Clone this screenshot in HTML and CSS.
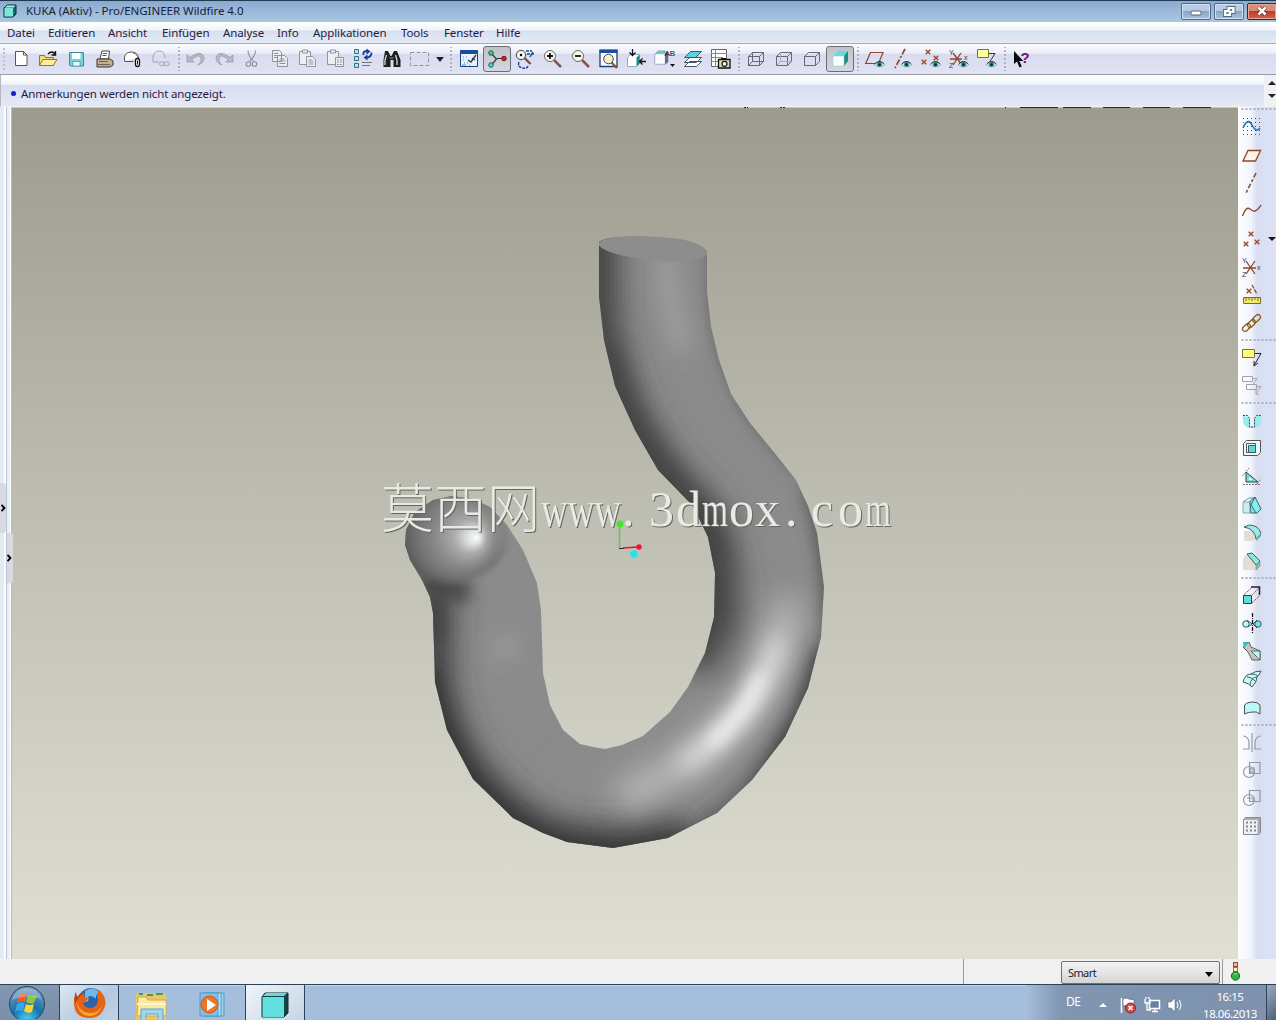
FILE: index.html
```html
<!DOCTYPE html>
<html lang="de">
<head>
    <meta charset="UTF-8">
    <title>KUKA (Aktiv) - Pro/ENGINEER Wildfire 4.0</title>
    <link rel="stylesheet" href="styles.css">
</head>
<body>
    <svg class="defs" width="0" height="0">
        <symbol id="eye" viewBox="0 0 12 8">
            <path d="M0 4Q6-2 12 4Q6 9 0 4z" fill="#d8f0f0" stroke="#467" stroke-width=".6"/>
            <circle cx="6" cy="4" r="2.8" fill="#1f7f86"/><circle cx="6" cy="4" r="1.2" fill="#012"/>
            <path d="M1 3Q6-2 11 3" fill="none" stroke="#122"/>
        </symbol>
        <symbol id="cross" viewBox="0 0 6 6"><path d="M.700.700l4.600 4.600M5.300.700L.700 5.300" stroke="#9c4a2c" stroke-width="1.400"/></symbol>
    </svg>

    <!-- Titelleiste -->
    <header class="titlebar">
        <svg class="app-icon" width="14" height="14" viewBox="0 0 14 14"><path d="M1 4l3-3h9v9l-3 3H1z" fill="#147070" stroke="#123"/><path d="M1.500 4h8.500v8.500H1.500z" fill="#7ce6d8"/><path d="M2 3.500L4 1.500h8.500l-2 2z" fill="#a5efe5"/></svg>
        <span class="title">KUKA (Aktiv) - Pro/ENGINEER Wildfire 4.0</span>
        <div class="win-buttons">
            <div class="win-btn"><svg width="28" height="14" viewBox="0 0 28 14"><rect x="9" y="7" width="10" height="4" rx="1" fill="#fff" stroke="#55677e"/></svg></div>
            <div class="win-btn"><svg width="28" height="14" viewBox="0 0 28 14"><g fill="none" stroke="#55677e" stroke-width="3"><path d="M13 3.500h6v5h-6zM9.500 6.500h6v5h-6z"/></g><g fill="#fff" stroke="#fff" stroke-width="1.200"><path d="M13 3.500h6v5h-6zM9.500 6.500h6v5h-6z"/></g><path d="M11.500 8.500h2v1h-2zM15 5.500h2v1h-2z" fill="#55677e" stroke="#55677e" stroke-width=".6"/></svg></div>
            <div class="win-btn close"><svg width="28" height="14" viewBox="0 0 28 14"><path d="M10.500 3.500l7 7M17.500 3.500l-7 7" stroke="#603030" stroke-width="4"/><path d="M10.500 3.500l7 7M17.500 3.500l-7 7" stroke="#fff" stroke-width="2.500"/></svg></div>
        </div>
    </header>

    <nav class="menubar">
        <span class="m1">Datei</span><span class="m2">Editieren</span><span class="m3">Ansicht</span><span class="m4">Einfügen</span><span class="m5">Analyse</span><span class="m6">Info</span><span class="m7">Applikationen</span><span class="m8">Tools</span><span class="m9">Fenster</span><span>Hilfe</span>
    </nav>

    <!-- Werkzeugleiste oben -->
    <div class="toolbar">
        <div class="btn"><svg viewBox="0 0 20 20"><path d="M4.500 2.500h8l3.500 3.500v10.500H4.500z" fill="#fff" stroke="#555"/><path d="M12.500 2.500V6H16" fill="none" stroke="#555"/></svg></div>
        <div class="btn"><svg viewBox="0 0 20 20"><path d="M.500 16.500V6.500h5l1 2h8v8z" fill="#f4dc70" stroke="#927824"/><path d="M.500 16.500l3.500-6h14l-4 6z" fill="#ffef9a" stroke="#927824"/><path d="M9 5q4-4 7 0M16.500 2v4h-4" fill="none" stroke="#111" stroke-width="1.400"/></svg></div>
        <div class="btn"><svg viewBox="0 0 20 20"><path d="M2.500 3.500h14v13.500h-13l-1-1z" fill="#72d4da" stroke="#3c8c98"/><path d="M5 4h8.500v6H5z" fill="#fff"/><path d="M6 12.500h7V17H6z" fill="#e8ffff" stroke="#3c8c98" stroke-width=".7"/></svg></div>
        <div class="btn"><svg viewBox="0 0 20 20"><path d="M5 10l2-8h7.500l-1 8z" fill="#fff" stroke="#444"/><path d="M8 4.500h4M7.500 6.500h4" stroke="#555"/><path d="M2 10h13l3 2v4l-3 2H2z" fill="#c4b28c" stroke="#333"/><path d="M4 12.500h9M3 15.500h12" fill="none" stroke="#665"/></svg></div>
        <div class="btn"><svg viewBox="0 0 20 20"><path d="M1.500 12V8q1-5 7-5 6 0 7 6" fill="#fff" stroke="#555"/><path d="M1.500 12.500h9" stroke="#555"/><path d="M10 4q5 1 5 6" fill="none" stroke="#d44"/><rect x="12.500" y="9.500" width="4" height="8" rx="2" fill="#fff" stroke="#111" stroke-width="1.300"/><path d="M14.500 11.500v4" stroke="#111"/></svg></div>
        <div class="btn"><svg viewBox="0 0 20 20" fill="none" stroke="#a3a6af"><path d="M2 13V8q1-6 7-6 5 1 5 7M2 13h6"/><rect x="8.500" y="13" width="5" height="3.500" rx="1.700"/><rect x="13" y="13" width="5.500" height="3.500" rx="1.700"/></svg></div>
        <i class="sep w7"></i>
        <div class="btn"><svg viewBox="0 0 20 20"><path d="M1 6v7h7l-2.500-2.200Q13 4 15 9q1 4-3 7 6-2 6-7Q16 0 4 8.500z" fill="#b8bcc6" stroke="#8e929d" stroke-width=".7"/></svg></div>
        <div class="btn"><svg viewBox="0 0 20 20"><path d="M19 6v7h-7l2.500-2.200Q7 4 5 9q-1 4 3 7-6-2-6-7Q4 0 16 8.500z" fill="#b8bcc6" stroke="#8e929d" stroke-width=".7"/></svg></div>
        <div class="btn"><svg viewBox="0 0 20 20" fill="none" stroke="#8f929a" stroke-width="1.100"><path d="M6 1.500q0 5 5.500 11M13.500 1.500q0 5-6 11"/><circle cx="6.500" cy="15" r="2.300"/><circle cx="12.500" cy="15" r="2.300"/></svg></div>
        <div class="btn"><svg viewBox="0 0 20 20" fill="#edeef4" stroke="#8f929a"><path d="M2.500 1.500h7l2 2v9h-9zM7.500 6.500h7l3 3v8h-10z"/><path d="M4 4.500h4M4 6.500h3M4 8.500h3M9.500 10h5M9.500 12h6M9.500 14.500h6"/></svg></div>
        <div class="btn"><svg viewBox="0 0 20 20" fill="#edeef4" stroke="#92959e"><path d="M1.500 2.500h11v13h-11z"/><path d="M4.500 1h5v3h-5zM8.500 7.500h6l3 3v7h-9z"/><path d="M10.500 11h4M10.500 13h5M10.500 15h5"/></svg></div>
        <div class="btn"><svg viewBox="0 0 20 20" fill="#edeef4" stroke="#92959e"><path d="M1.500 2.500h11v13h-11z"/><path d="M4.500 1h5v3h-5zM9.500 8.500h8v9h-8z"/><path d="M11 11h2M14 11h2M11 13h2M14 13h2M11 15.500h2M14 15.500h2"/></svg></div>
        <div class="btn"><svg viewBox="0 0 20 20"><g fill="#bde4e6" stroke="#2a7480"><path d="M.500.500h4v4h-4zM.500 7.500h4v4h-4zM.500 14.500h4v4h-4z"/></g><path d="M9.500 6q-1-4 4-4M17.500 3.500q0 5-5 5" fill="none" stroke="#153f9c" stroke-width="1.800"/><path d="M12.500-.5l4 3-4 3zM13.500 5.500v6l-4-3z" fill="#153f9c"/><path d="M8 13.500h10M8 16.500h8" stroke="#777"/></svg></div>
        <div class="btn"><svg viewBox="0 0 20 20"><path d="M3 2h3l2.500 5h1L12 2h3l3.500 9v7h-7v-7h-3v7h-7v-7z" fill="#1d1f20"/><path d="M4.500 6l-1.500 5v5M13.500 6l1.500 5v5" stroke="#ddd" stroke-width="1.300" fill="none"/><path d="M7.500 9h4" stroke="#999"/></svg></div>
        <div class="btn"><svg viewBox="0 0 20 20"><path d="M.500 3.500h18v13h-18z" fill="none" stroke="#9094a0" stroke-dasharray="4 2"/></svg></div>
        <div class="drop"></div>
        <i class="sep w9"></i>
        <div class="btn"><svg viewBox="0 0 20 20"><path d="M1.500 1.500h17v16h-17z" fill="#e6f3ff" stroke="#17417f"/><path d="M1 1h18v4H1z" fill="#164f9c"/><path d="M17 6l-5 7-3-2M13 9l3 2" fill="none" stroke="#334" stroke-width="1.300"/><path d="M4 8h1M7 8h1M4 11h1M5 14h1M8 14h1M3 16h4M10 16h1" stroke="#4d98dc"/></svg></div>
        <div class="btn pressed"><svg viewBox="0 0 20 20"><path d="M4.500 4.500l5 5.500-5 6M10 9.500h8" fill="none" stroke="#333" stroke-width="1.200"/><circle cx="4" cy="4" r="2.300" fill="#58bd80" stroke="#17663c"/><circle cx="4" cy="16" r="2.300" fill="#58cbd0" stroke="#176c70"/><circle cx="17" cy="9.500" r="2.300" fill="#c92038" stroke="#851020"/></svg></div>
        <div class="btn"><svg viewBox="0 0 20 20"><circle cx="6" cy="6" r="4.700" fill="#f3f3ee" stroke="#444"/><circle cx="6" cy="6" r="1.200"/><path d="M9.500 9l6 6" stroke="#75504a" stroke-width="2.300"/><path d="M11 2h6M12 5h7M15 8l3-5M4 13q-2 5 4 6M13 17q-1 3-5 2" fill="none" stroke="#17439a" stroke-width="1.400" stroke-dasharray="3 1"/></svg></div>
        <div class="btn"><svg viewBox="0 0 20 20"><path d="M11 11l7 7" stroke="#87564a" stroke-width="2.500"/><circle cx="7" cy="7" r="5.500" fill="#fbfbf2" stroke="#666"/><path d="M4 7h6M7 4v6" stroke="#111" stroke-width="1.800"/></svg></div>
        <div class="btn"><svg viewBox="0 0 20 20"><path d="M11 11l7 7" stroke="#87564a" stroke-width="2.500"/><circle cx="7" cy="7" r="5.500" fill="#fbfbf2" stroke="#666"/><path d="M4 7h6" stroke="#111" stroke-width="1.800"/></svg></div>
        <div class="btn"><svg viewBox="0 0 20 20"><path d="M1 1.500h17v16H1z" fill="#fff" stroke="#163f7e" stroke-width="1.300"/><path d="M.500.500h18v3.500H.500z" fill="#164f9c"/><path d="M12 13l6 6" stroke="#87564a" stroke-width="2.300"/><circle cx="9.500" cy="10" r="4.800" fill="#f2efd6" stroke="#444"/></svg></div>
        <div class="btn"><svg viewBox="0 0 20 20"><path d="M.500 8.500l3-3h9v9l-3 3h-9z" fill="#fff" stroke="#9ab"/><path d="M9.500 8.500l3-3v9l-3 3z" fill="#288"/><path d="M5.500 0v6M2.500 3.500l3 3 3-3M19 12.500h-6M15.500 9.500l-3 3 3 3" fill="none" stroke="#111" stroke-width="1.300"/></svg></div>
        <div class="btn"><svg viewBox="0 0 20 20"><path d="M0 5l3-3h7v2l3 2v7l-2 2H0z" fill="#61d2d9" stroke="#90a0b8"/><path d="M0 5h10v10H0z" fill="#fff" stroke="#aac" stroke-width=".5"/><path d="M10 5l3-2v10l-3 2z" fill="#5c6f90"/><text x="9.500" y="6.500" class="mini">AB</text><path d="M15 15h5l-2.500 3z" fill="#111"/></svg></div>
        <div class="btn"><svg viewBox="0 0 20 20" stroke="#456"><path d="M1.500 17.500l5-5h12l-5 5zM1.500 13.500l5-5h12l-5 5z" fill="#fff"/><path d="M1.500 8.500l6-6h11l-6 6z" fill="#58d5d8"/></svg></div>
        <div class="btn"><svg viewBox="0 0 20 20"><path d="M.500.500h15v17H.500z" fill="#fff" stroke="#666"/><path d="M0 4.500h16M0 8.500h12M0 12.500h8M4.500 0v18" stroke="#888"/><path d="M7.500 10.500h11.500v8.500H7.500z" fill="#ded6bd" stroke="#111" stroke-width="1.300"/><circle cx="13.500" cy="14.800" r="2.500" fill="#fff" stroke="#111" stroke-width="1.200"/><path d="M10 9.500h5" stroke="#111"/></svg></div>
        <i class="sep w7"></i>
        <div class="btn"><svg viewBox="0 0 20 20" fill="none" stroke="#656872"><path d="M2.500 7.500l4-4h11v9l-4 4h-11zM2.500 7.500h11v9M13.500 7.500l4-4M6.500 3.500v9h11M6.500 12.500l-4 4"/></svg></div>
        <div class="btn"><svg viewBox="0 0 20 20" fill="none" stroke="#656872"><path d="M2.500 7.500l4-4h11v9l-4 4h-11zM2.500 7.500h11v9M13.500 7.500l4-4"/><path d="M6.500 3.500v9h11M6.500 12.500l-4 4" stroke="#aab" /></svg></div>
        <div class="btn"><svg viewBox="0 0 20 20" fill="none" stroke="#656872"><path d="M2.500 7.500l4-4h11v9l-4 4h-11zM2.500 7.500h11v9M13.500 7.500l4-4"/></svg></div>
        <div class="btn pressed"><svg viewBox="0 0 20 20"><path d="M3 7l5-5h10l-4 5z" fill="#66ddda"/><path d="M14 7l4-5v10l-4 5z" fill="#238889"/><path d="M3 7h11v10H3z" fill="#f8ffff" stroke="#9cc" stroke-width=".6"/></svg></div>
        <i class="sep w7"></i>
        <div class="btn"><svg viewBox="0 0 20 20"><path d="M.700 14.500L5.500 3.500H18L13.500 14.500z" fill="none" stroke="#8b482c" stroke-width="1.200"/><use href="#eye" x="9" y="12" width="11" height="7"/></svg></div>
        <div class="btn"><svg viewBox="0 0 20 20"><path d="M12 0L2 19" stroke="#8b482c" stroke-width="1.700" stroke-dasharray="6 2 2 2"/><use href="#eye" x="8" y="12" width="11" height="7"/></svg></div>
        <div class="btn"><svg viewBox="0 0 20 20"><use href="#cross" x="4" y="0" width="6" height="6"/><use href="#cross" x="0" y="10" width="6" height="6"/><use href="#cross" x="12" y="6" width="6" height="6"/><use href="#eye" x="9" y="12" width="11" height="7"/></svg></div>
        <div class="btn"><svg viewBox="0 0 20 20"><path d="M1 10h12M4 4l9 12M12 4L4 16" stroke="#8b482c" stroke-width="1.300"/><text x="0" y="6" class="axis">Y</text><text x="0" y="19" class="axis">Z</text><text x="15" y="11" class="axis">x</text><use href="#eye" x="9" y="12" width="11" height="7"/></svg></div>
        <div class="btn"><svg viewBox="0 0 20 20"><path d="M.500.500h11v8H.500z" fill="#ffff9e" stroke="#777633"/><path d="M12 4.500h6l-5 8" fill="none" stroke="#333"/><use href="#eye" x="9" y="12" width="11" height="7"/></svg></div>
        <i class="sep w7"></i>
        <div class="btn"><svg viewBox="0 0 20 20"><path d="M2 2v13l3-2.500 2.500 6 2.300-1-2.500-5.500h4z" fill="#080812"/><text x="8.500" y="14" class="help">?</text></svg></div>
    </div>

    <div class="message">
        <span class="dot"></span><span class="msg-text">Anmerkungen werden nicht angezeigt.</span>
        <div class="msg-scroll"><i class="up"></i><i class="down"></i></div>
    </div>

    <main class="work">
        <div class="splitter">
            <div class="handle h1"><svg width="5" height="8" viewBox="0 0 5 8"><path d="M.500 1l3 3-3 3" fill="none" stroke="#000" stroke-width="1.800"/></svg></div>
            <div class="handle h2"><svg width="5" height="8" viewBox="0 0 5 8"><path d="M.500 1l3 3-3 3" fill="none" stroke="#000" stroke-width="1.800"/></svg></div>
        </div>

        <svg class="canvas" width="1226" height="852" viewBox="12 107 1226 852">
            <defs>
                <linearGradient id="bg" x1="0" y1="0" x2="0" y2="1"><stop offset="0" stop-color="#9c9b8e"/><stop offset=".45" stop-color="#bdbcb0"/><stop offset="1" stop-color="#e0dfd3"/></linearGradient>
                <radialGradient id="ball" gradientUnits="userSpaceOnUse" cx="456" cy="534" r="52" fx="477" fy="538">
                    <stop offset="0" stop-color="#fbfdfc"/><stop offset=".12" stop-color="#dfe3e2"/><stop offset=".32" stop-color="#a9abaa"/><stop offset=".55" stop-color="#8c8c8c"/><stop offset=".8" stop-color="#747474"/><stop offset="1" stop-color="#5c5c5c"/>
                </radialGradient>
                <linearGradient id="fade" gradientUnits="userSpaceOnUse" x1="484" y1="530" x2="506" y2="526"><stop offset="0" stop-color="#fff"/><stop offset="1" stop-color="#000"/></linearGradient>
                <mask id="ballmask"><path d="M395 480H510V545Q488 580 450 583 420 582 395 560z" fill="url(#fade)" filter="url(#b3)"/></mask>
                <filter id="b3" x="-30%" y="-30%" width="160%" height="160%"><feGaussianBlur stdDeviation="3"/></filter>
                <filter id="b8" filterUnits="userSpaceOnUse" x="300" y="130" width="640" height="820"><feGaussianBlur stdDeviation="8"/></filter>
                <filter id="b11" filterUnits="userSpaceOnUse" x="300" y="130" width="640" height="820"><feGaussianBlur stdDeviation="11"/></filter>
                <filter id="b14" filterUnits="userSpaceOnUse" x="300" y="130" width="640" height="820"><feGaussianBlur stdDeviation="15"/></filter>
                <clipPath id="hook"><path d="M599 242V297L604 340 615 386 635 430 658 470 693 506 708 537 715 573 714 617 705 653 688 687 670 712 643 736 622 745 605 749 593 747 580 744 563 730 550 705 543 673 541 610 537 583 523 550 507 525 490 507 473 499 452 496 433 500 415 512 406 530 405 545 410 560 422 580 430 597 433 613 435 682 447 730 473 779 513 818 543 833 567 842 613 848 668 838 717 813 752 780 785 737 808 688 821 637 824 587 817 533 808 506 796 480 777 456 750 423 731 394 719 360 711 327 707 292V252Q704 244 680 239 650 235 620 237 603 238 599 242z"/></clipPath>
            </defs>
            <rect x="12" y="108" width="1226" height="851" fill="url(#bg)"/>
            <path d="M12 107.500h1226" stroke="#c9c9c2"/>
            <path d="M744 107.500h2M747 107.500h1M780 107.500h2M783 107.500h2M1005 107.500h1M1020 107.500h38M1063 107.500h28M1103 107.500h27M1143 107.500h27M1183 107.500h28" stroke="#26262c"/>

            <g clip-path="url(#hook)" fill="none">
                <path d="M390 220h450v640H390z" fill="#8b8b8b"/>
                <!-- dunkle Flanken -->
                <path d="M592 190V300Q597 380 632 438T694 515Q720 560 712 625L695 670" stroke="#3c3c3c" stroke-width="52" stroke-opacity=".9" filter="url(#b14)"/>
                <path d="M605 350Q622 430 665 478T712 560" stroke="#444" stroke-width="26" stroke-opacity=".75" filter="url(#b11)"/>
                <path d="M428 590V680Q440 750 480 792T560 844 Q620 858 690 838" stroke="#383838" stroke-width="48" stroke-opacity=".9" filter="url(#b14)"/>
                <path d="M428 670Q438 745 480 792T565 848Q620 862 680 846T765 785 800 725 826 650" stroke="#343434" stroke-width="20" stroke-opacity=".9" filter="url(#b8)"/>
                <path d="M700 830Q790 770 822 650" stroke="#404040" stroke-width="16" stroke-opacity=".6" filter="url(#b11)"/>
                <path d="M828 670Q836 560 808 485" stroke="#505050" stroke-width="14" filter="url(#b8)"/>
                <path d="M716 240V300Q724 380 762 425L800 470" stroke="#5c5c5c" stroke-width="12" filter="url(#b8)"/>
                <path d="M420 578Q440 592 470 592" stroke="#444" stroke-width="20" filter="url(#b8)"/>
                <path d="M436 590V640" stroke="#444" stroke-width="14" filter="url(#b8)"/>
                <path d="M666 255Q668 310 684 350" stroke="#a6a6a6" stroke-width="14" filter="url(#b11)"/>
                <path d="M498 649L512 646" stroke="#a8a8a8" stroke-width="14" stroke-linecap="round" stroke-opacity=".8" filter="url(#b11)"/>
                <path d="M740 640Q715 700 665 740T560 775" stroke="#8f8f8f" stroke-width="24" stroke-opacity=".5" filter="url(#b14)"/>
                <!-- Glanzlicht -->
                <path d="M788 600Q780 668 738 716T620 800" stroke="#c4c6c5" stroke-width="30" stroke-opacity=".8" filter="url(#b14)"/>
                <path d="M776 645Q764 688 739 716T688 762" stroke="#f0f4f2" stroke-width="18" stroke-linecap="round" stroke-opacity=".75" filter="url(#b11)"/>
                <path d="M760 677Q750 702 738 716T713 742" stroke="#fff" stroke-width="11" stroke-linecap="round" stroke-opacity=".85" filter="url(#b8)"/>
                <circle cx="456" cy="536" r="60" fill="url(#ball)" mask="url(#ballmask)"/>
                <ellipse cx="653" cy="248.500" rx="54.500" ry="11.500" transform="rotate(5 653 248.500)" fill="#8d8d8d"/>
            </g>

            <g class="triad">
                <path d="M619.500 525V548" stroke="#67c256" stroke-width="1.500"/><path d="M619 548.500h5" stroke="#333"/><path d="M623 548L638 547" stroke="#d61638" stroke-width="1.500"/>
                <circle cx="620" cy="524" r="3.500" fill="#45e52c"/><circle cx="639" cy="547" r="2.700" fill="#f0103c"/><circle cx="634" cy="554" r="3.800" fill="#20e5e8"/>
            </g>

            <text class="watermark" y="526"><tspan class="cjk" x="381" y="528">莫西网</tspan><tspan x="541" y="526" textLength="80" lengthAdjust="spacingAndGlyphs">www</tspan><tspan x="622">.</tspan><tspan x="649">3</tspan><tspan x="676">d</tspan><tspan x="702" textLength="26" lengthAdjust="spacingAndGlyphs">m</tspan><tspan x="729">o</tspan><tspan x="755">x</tspan><tspan x="785">.</tspan><tspan x="811">c</tspan><tspan x="838">o</tspan><tspan x="865" textLength="26" lengthAdjust="spacingAndGlyphs">m</tspan></text>
        </svg>

        <!-- Feature-Leiste rechts -->
        <aside class="features">
            <i class="hsep s5"></i>
            <div class="btn"><svg viewBox="0 0 20 20"><path d="M1 1.500h18M1 5.500h18M1 9.500h18M1 13.500h18M1 17.500h18" stroke="#405068" stroke-dasharray="1 3"/><path d="M1 11Q6 0 10 8T18 11" fill="none" stroke="#1470b8" stroke-width="1.500"/></svg></div>
            <div class="btn"><svg viewBox="0 0 20 20"><path d="M1 16L6 5.500H18.500L13.500 16z" fill="#fff3ea" stroke="#8b482c" stroke-width="1.300"/></svg></div>
            <div class="btn"><svg viewBox="0 0 20 20"><path d="M14 0L4 20" stroke="#8b482c" stroke-width="1.600" stroke-dasharray="5 2 3 2"/></svg></div>
            <div class="btn"><svg viewBox="0 0 20 20"><path d="M.500 15Q4 5 8 8t5 2q3-1 6-6" fill="none" stroke="#8b482c" stroke-width="1.400"/></svg></div>
            <div class="btn"><svg viewBox="0 0 20 20"><use href="#cross" x="6" y="2" width="6" height="6"/><use href="#cross" x="1" y="12" width="6" height="6"/><use href="#cross" x="12" y="10" width="6" height="6"/></svg><i class="side-drop"></i></div>
            <div class="btn"><svg viewBox="0 0 20 20"><path d="M1 11h13M4 4l9 13M13 4L4 17" stroke="#8b482c" stroke-width="1.300"/><text x="0" y="6" class="axis">Y</text><text x="0" y="20" class="axis">Z</text><text x="15" y="13" class="axis">x</text></svg></div>
            <div class="btn"><svg viewBox="0 0 20 20"><use href="#cross" x="4" y="3" width="6" height="6"/><path d="M10 0l5 9" stroke="#8b482c" stroke-width="1.300" stroke-dasharray="4 1"/><path d="M1.500 12.500h17v6h-17z" fill="#f2e86b" stroke="#777025"/><path d="M4 13v3M7 13v2M10 13v3M13 13v2M16 13v3" stroke="#777025"/></svg></div>
            <div class="btn"><svg viewBox="0 0 20 20" fill="none" stroke="#8c5c1c" stroke-width="1.300"><rect x="0" y="12" width="9" height="5" rx="2.500" transform="rotate(-43 4.500 14.500)"/><rect x="5" y="8" width="9" height="5" rx="2.500" transform="rotate(-43 9.500 10.500)"/><rect x="10" y="3" width="9" height="5" rx="2.500" transform="rotate(-43 14.500 5.500)"/></svg></div>
            <i class="hsep s6"></i>
            <div class="btn"><svg viewBox="0 0 20 20"><path d="M.500 2.500h12v8H.500z" fill="#fffb79" stroke="#777633"/><path d="M13 6.500h6l-7 12M12 14v5l4-3" fill="none" stroke="#222"/></svg></div>
            <div class="btn"><svg viewBox="0 0 20 20" fill="none" stroke="#a2a4aa"><path d="M.500 1.500h10v5H.500zM4.500 9.500h10v5h-10zM11 3.500h4l-4 6M15 11.500h4l-5 7M14 15v4h3"/></svg></div>
            <i class="hsep s8"></i>
            <div class="btn"><svg viewBox="0 0 20 20"><path d="M1 5q-1 9 5 12h8q6-3 5-12l-5 1-1.500 2v8h-5V8L6 6z" fill="#92edf0"/><path d="M1 4.500h4.500l2 3v8.500h5V7.500l2-3H19" fill="none" stroke="#264b58" stroke-dasharray="2 1"/></svg></div>
            <div class="btn"><svg viewBox="0 0 20 20" fill="#e8fbfa" stroke="#555"><path d="M1.500 4.500l3-3h14v12l-3 3h-14z"/><path d="M4.500 4.500h9v9h-9z"/><path d="M6.500 6.500h7v7h-7z" fill="#55dbd9"/></svg></div>
            <div class="btn"><svg viewBox="0 0 20 20"><path d="M.500 9L7 1M1 17.500h18M15 17l4-5" stroke="#777" stroke-dasharray="2 1"/><path d="M4 5v10h12z" fill="#76dcda" stroke="#344"/><path d="M7 10v3h4z" fill="#fff"/></svg></div>
            <div class="btn"><svg viewBox="0 0 20 20"><path d="M1 7h8v11H1z" fill="#c9eef0" stroke="#8aa"/><path d="M8 6l5-4 6 12-4 4H9z" fill="#86efec" stroke="#367"/><path d="M1 7l6-4h6L8 6v12" fill="none" stroke="#699"/><path d="M13 2l-4 8 5 8" fill="none" stroke="#367"/></svg></div>
            <div class="btn"><svg viewBox="0 0 20 20"><path d="M2 8h8l3 4v6H2z" fill="#e5ddd4"/><path d="M2 4l5-2q10 0 12 9l-5 5Q13 6 2 4z" fill="#9cebe8" stroke="#465e62"/><path d="M14 18l5-5v-3l-5 5z" fill="#66a6a6"/></svg></div>
            <div class="btn"><svg viewBox="0 0 20 20"><path d="M1 7l4-4 9 9v7H1z" fill="#e5ddd4"/><path d="M5 3l5-1 8 8-4 4z" fill="#8ce6e4" stroke="#465e62"/><path d="M14 19v-5l4-4v5z" fill="#88b6b0" stroke="#777" stroke-width=".5"/></svg></div>
            <i class="hsep s6"></i>
            <div class="btn"><svg viewBox="0 0 20 20"><path d="M1.500 10.500h8v8h-8z" fill="#66dddc" stroke="#244"/><path d="M1.500 10l8-7M9.500 10.500l8-8M9.500 18.500l8-8" fill="none" stroke="#866" stroke-dasharray="3 1"/><path d="M9 2h8.500v8" fill="none" stroke="#223" stroke-width="1.500"/></svg></div>
            <div class="btn"><svg viewBox="0 0 20 20" fill="none" stroke="#315969"><path d="M10.500 0v20" stroke="#112" stroke-width="1.300" stroke-dasharray="4 1 1 1"/><circle cx="4" cy="11" r="3.200" fill="#c4f4f5"/><circle cx="16" cy="11" r="3.200" fill="#7ee1e3"/><path d="M5 7l5 4-4 3M15 7l-4 4 4 4"/></svg></div>
            <div class="btn"><svg viewBox="0 0 20 20"><path d="M1 6l6-5 2 5 9 4v9h-8L6 11z" fill="#c9c1bb" stroke="#566"/><path d="M1 1h6L2 7z" fill="#38baba"/><path d="M9 10h9v9z" fill="#b4f7f5" stroke="#455" stroke-width=".8"/></svg></div>
            <div class="btn"><svg viewBox="0 0 20 20"><path d="M1 13q2-8 8-8 4-3 10-3-1 3-4 6 0 5-5 10-3-4-9-5z" fill="#c8fafa" stroke="#455"/><path d="M5 8q5 0 8 4M8 16q1-8 7-8M9 5q5 0 7 2" fill="none" stroke="#466"/></svg></div>
            <div class="btn"><svg viewBox="0 0 20 20"><path d="M2.500 17V8Q5 5 10 5q6 0 8 3v9q-4-3-7-2-5 0-8.500 2z" fill="#bdf8f8" stroke="#455"/></svg></div>
            <i class="hsep s7"></i>
            <div class="btn"><svg viewBox="0 0 20 20" fill="none" stroke="#9699a2" stroke-width="1.200"><path d="M10 1v19M1 4q5 0 6 6v7H1M19 4q-5 0-6 6v7h6"/></svg></div>
            <div class="btn"><svg viewBox="0 0 20 20" fill="none" stroke="#9699a2" stroke-width="1.200"><path d="M7.500 2.500h10.500v11H7.500z"/><circle cx="7" cy="12" r="5.500"/><path d="M8 8h4v5H8z" fill="#c9ccd3"/></svg></div>
            <div class="btn"><svg viewBox="0 0 20 20" fill="none" stroke="#9699a2" stroke-width="1.200"><path d="M7.500 2.500h10.500v11H7.500z"/><circle cx="7" cy="12" r="5.500"/><path d="M5 10h6v4"/></svg></div>
            <div class="btn"><svg viewBox="0 0 20 20"><path d="M1.500 3.500l2-2h15v15l-2 2h-15z" fill="#a8abb2" stroke="#858890"/><path d="M2 4h13.500v14H2z" fill="#eef0f4"/><path d="M4 6.500h11M4 10.500h11M4 14.500h11" stroke="#858890" stroke-width="2" stroke-dasharray="2 2"/></svg></div>
        </aside>
    </main>

    <footer class="status">
        <div class="status-left"></div>
        <div class="filter"><span>Smart</span><i></i></div>
        <div class="light"><svg width="12" height="20" viewBox="0 0 12 20"><rect x="3.500" y=".500" width="4" height="4" fill="#e8b8a8" stroke="#94463a"/><rect x="3.500" y="5.500" width="4" height="4" fill="#fff29a" stroke="#8a8030"/><circle cx="5.500" cy="14" r="4.200" fill="#2fb14b" stroke="#126428"/><path d="M4 12h3" stroke="#a2f5b0"/></svg></div>
    </footer>

    <div class="taskbar">
        <div class="start">
            <svg width="38" height="34" viewBox="0 0 38 34">
                <defs><radialGradient id="orb" cx=".5" cy=".95" r=".95"><stop offset="0" stop-color="#47d3f5"/><stop offset=".45" stop-color="#1670ad"/><stop offset="1" stop-color="#7fa0bd"/></radialGradient></defs>
                <circle cx="19" cy="19" r="17.500" fill="url(#orb)" stroke="#24435f"/>
                <path d="M11 10q4-3 8-1l-2 8q-4-2-8 1z" fill="#f0622b"/><path d="M20 10q4 2 9 0l-3 8q-4 2-8-1z" fill="#8dc63f"/><path d="M9 19q4-3 8-1l-2 8q-4-2-8 1z" fill="#38a7e8"/><path d="M18 19q4 2 8 0l-2 8q-4 2-8-1z" fill="#ffd231"/>
                <path d="M4 15Q8 3 19 3t15 12q-14-7-30 0z" fill="#fff" opacity=".25"/>
            </svg>
        </div>
        <div class="task open">
            <svg width="34" height="34" viewBox="0 0 34 34"><circle cx="18" cy="15" r="13" fill="#2c64aa"/><path d="M12 5q8-6 15 2-5 1-4 6-5-5-8-2 2 5-3 5z" fill="#70b9e8"/><path d="M3 6q0 4 2 5 2-4 6-4-1 4 4 5-2 5-5 5 2 6 8 5 7-1 7-9-2-5 1-9 8 7 6 16-4 13-17 12Q1 31 1 17q0-7 2-11z" fill="#e36418"/><path d="M3 14q3 13 15 13 9 0 12-10-3 13-14 13Q5 29 3 14z" fill="#f7aa25"/><path d="M3 6q-2 5-1 12 2-6 9-11-5 0-6 4-2-1-2-5z" fill="#b93c12"/></svg>
        </div>
        <div class="task folder">
            <svg width="34" height="30" viewBox="0 0 34 30"><path d="M2 3l2-2h27l1 3v24H2z" fill="#e9c765"/><path d="M4 5h8l2 3h18v16H3z" fill="#fae9a2" stroke="#ceaa4e"/><path d="M5 2h4M13 3h6M22 2h7" stroke="#509850" stroke-width="2"/><path d="M3 12h29" stroke="#fff7c9" stroke-width="2"/><path d="M7 30V17h22v13h-5v-8H12v8z" fill="#9fd5f0" stroke="#57a5cf"/><path d="M12 25h12v5H12z" fill="#f1c15b"/></svg>
        </div>
        <div class="task player">
            <svg width="30" height="28" viewBox="0 0 30 28"><path d="M8 2h18v23H8z" fill="#9bcfe9" stroke="#4e9dc7"/><path d="M5 2h18v23H5z" fill="#b9e1f3" stroke="#4e9dc7"/><path d="M2 2h18v23H2z" fill="#85bfe2" stroke="#4e9dc7"/><circle cx="11.500" cy="13.500" r="8.500" fill="#ee762b" stroke="#c8571b"/><path d="M9 8l9 6-9 6z" fill="#fff"/></svg>
        </div>
        <div class="task open active"><svg width="28" height="28" viewBox="0 0 28 28"><path d="M1 5l3-4h23v20l-4 4H1z" fill="#0f4749" stroke="#092e32"/><path d="M1.500 5h21.500v20H1.500z" fill="#62dfdf"/><path d="M2 4l3-3h21l-3 3z" fill="#72d6d4"/></svg></div>
        <div class="tray">
            <span class="lang">DE</span>
            <i class="tray-up"></i>
            <svg class="flag" width="18" height="18" viewBox="0 0 18 18"><path d="M2.500 2v15" stroke="#fff" stroke-width="1.500"/><path d="M4 3q3-2 6 0 3 1 5 0v7q-3 1-5 0-3-1-6 0z" fill="#fff" stroke="#45566a" stroke-width=".6"/><circle cx="11.500" cy="12" r="5" fill="#d94747" stroke="#8e2525"/><path d="M9.500 10l4 4M13.500 10l-4 4" stroke="#fff" stroke-width="1.700"/></svg>
            <svg class="net" width="17" height="18" viewBox="0 0 17 18"><path d="M5.500 4.500h10v8h-10z" fill="#6481a0" stroke="#fff" stroke-width="1.500"/><path d="M8 15.500h6M11 13v3M3 7v7h4M1 3v4h5V3M2 1v2M5 1v2" stroke="#fff" stroke-width="1.300" fill="none"/></svg>
            <svg class="sound" width="17" height="18" viewBox="0 0 17 18"><path d="M1 6h3l4-4v14l-4-4H1z" fill="#fff" stroke="#4a5c70" stroke-width=".5"/><path d="M10 6q2 3 0 6M12.500 4q3 5 0 10" fill="none" stroke="#fff"/></svg>
            <div class="clock"><span>16:15</span><span>18.06.2013</span></div>
            <div class="peek"></div>
        </div>
    </div>
</body>
</html>
```

FILE: styles.css
```css
* {
    box-sizing: border-box;
}
body {
    margin: 0;
    width: 1276px;
    height: 1020px;
    overflow: hidden;
    display: flex;
    flex-direction: column;
    font-family: "Noto Sans", "Open Sans", sans-serif;
    font-size: 12px;
    color: #2a1a40;
    background: #f0f0f0;
}
svg {
    display: block;
    flex: none;
}
.defs {
    position: absolute;
}

/* Titelleiste */
.titlebar {
    height: 22px;
    flex: none;
    display: flex;
    align-items: center;
    padding-left: 3px;
    border-top: 1px solid #1d3c54;
    background: linear-gradient(#8aa9cf, #9ab6d8 40%, #a8c8e1);
}
.app-icon {
    margin-top: -2px;
}
.title {
    margin: -2px 0 0 9px;
    font-size: 11.5px;
    letter-spacing: -0.03px;
    color: #152238;
    white-space: nowrap;
}
.win-buttons {
    margin-left: auto;
    display: flex;
    gap: 3px;
    width: 95px;
    overflow: hidden;
    margin-top: -1px;
}
.win-btn {
    flex: none;
    width: 30px;
    height: 17px;
    border: 1px solid #506a8a;
    border-radius: 2px;
    box-shadow: inset 0 0 0 1px #d2e2f2;
    background: linear-gradient(#b7cbe3 45%, #88a6c6 50%, #a9c3dd);
}
.win-btn.close {
    border-color: #5a1a1c;
    box-shadow: inset 0 0 0 1px #e9a698;
    background: linear-gradient(#dc8b79 45%, #bd3a24 50%, #d36546);
}

/* Menue */
.menubar {
    height: 22px;
    flex: none;
    display: flex;
    align-items: center;
    padding-left: 7px;
    border-bottom: 1px solid #a9acb5;
    background: linear-gradient(#fff 0, #f0f4fb 38%, #d6e0ef 44%, #e3eaf5);
    font-size: 11.5px;
    letter-spacing: -0.1px;
    white-space: nowrap;
}
.menubar span {
    flex: none;
}
.m1 { width: 41px; }
.m2 { width: 60px; }
.m3 { width: 54px; }
.m4 { width: 61px; }
.m5 { width: 54px; }
.m6 { width: 36px; }
.m7 { width: 88px; }
.m8 { width: 43px; }
.m9 { width: 52px; }

/* Werkzeugleiste */
.toolbar {
    height: 31px;
    flex: none;
    display: flex;
    align-items: center;
    padding-left: 7px;
    border-bottom: 1px solid #989ba6;
    background: linear-gradient(#fafbfe, #eceef8 30%, #d9dbef 35%, #e0e3f3);
    position: relative;
}
.toolbar::before {
    content: "";
    position: absolute;
    left: 3px;
    top: 4px;
    height: 22px;
    border-left: 2px dotted #bcc0cf;
}
.btn {
    flex: none;
    width: 28px;
    height: 28px;
    display: flex;
    align-items: center;
    justify-content: center;
}
.btn svg {
    width: 20px;
    height: 20px;
    overflow: visible;
}
.btn.pressed {
    height: 26px;
    border: 1px solid #6c6e76;
    border-radius: 3px;
    background: linear-gradient(#bfc2ca, #d4d7df);
}
.sep {
    flex: none;
    height: 24px;
    background: radial-gradient(circle, #aeb2c4 1px, transparent 1.3px) center / 4px 4px repeat-y;
}
.w7 { width: 7px; }
.w9 { width: 9px; }
.drop {
    flex: none;
    width: 12px;
    display: flex;
    justify-content: center;
}
.drop::before {
    content: "";
    border: 4px solid transparent;
    border-top: 5px solid #1c2538;
    border-bottom: 0;
}
.mini {
    font: 8px "Liberation Sans", sans-serif;
    fill: #111;
}
.axis {
    font: 7px "Liberation Sans", sans-serif;
    fill: #333a55;
}
.help {
    font: bold 15px "Liberation Sans", sans-serif;
    fill: #74127e;
}

/* Meldungszeile */
.message {
    height: 32px;
    flex: none;
    display: flex;
    align-items: center;
    padding-left: 10px;
    border-left: 1px solid #b5b8c0;
    border-bottom: 1px solid #f0f0ee;
    background: linear-gradient(#fff, #f2f5fb 30%, #d6dcf0 33%, #e3e8f6 90%);
}
.dot {
    width: 5px;
    height: 5px;
    margin-top: 6px;
    border-radius: 50%;
    background: #1818d8;
}
.msg-text {
    margin: 6px 0 0 5px;
    font-size: 11.5px;
    letter-spacing: -0.16px;
}
.msg-scroll {
    margin-left: auto;
    width: 12px;
    height: 100%;
    background: #f0f1f4;
    display: flex;
    flex-direction: column;
    align-items: flex-end;
    justify-content: space-between;
    padding: 6px 0 8px;
}
.msg-scroll i {
    border: 4px solid transparent;
}
.msg-scroll .up {
    border-top: 0;
    border-bottom-color: #222;
}
.msg-scroll .down {
    border-bottom: 0;
    border-top-color: #222;
}

/* Arbeitsbereich */
.work {
    height: 852px;
    flex: none;
    display: flex;
}
.splitter {
    width: 12px;
    flex: none;
    position: relative;
    background: linear-gradient(90deg, #e3edf1 0 4px, #fafcff 4px 6px, #b9c4d2 6px 7px, #e9eff7 7px 10px, #fff 10px 11px, #b6bac2 11px);
}
.handle {
    position: absolute;
    width: 6px;
    height: 50px;
    display: flex;
    align-items: center;
    background: #d9d9e1;
    border-radius: 0 3px 3px 0;
}
.h1 { left: 0; top: 376px; padding-left: 1px; }
.h2 { left: 7px; top: 426px; }
.canvas {
    flex: none;
}
.watermark {
    font-family: "Liberation Serif", serif;
    font-size: 50px;
    fill: #e9e9e5;
    filter: drop-shadow(1px 1px 0 #66665f);
}
.cjk {
    font-family: "Noto Sans CJK SC", sans-serif;
    font-size: 53px;
    font-weight: 300;
}
.features {
    width: 38px;
    flex: none;
    display: flex;
    flex-direction: column;
    padding-top: 1px;
    background: linear-gradient(90deg, #fff, #f1f4fb 35%, #d8def1 50%, #dde2f3);
}
.features .btn {
    position: relative;
}
.hsep {
    flex: none;
    margin-left: 3px;
    background: radial-gradient(circle, #a9b0c5 1px, transparent 1.3px) center / 4px 4px repeat-x;
}
.s5 { height: 5px; background-position-y: -1px; }
.s6 { height: 6px; }
.s7 { height: 7px; }
.s8 { height: 8px; }
.side-drop {
    position: absolute;
    left: 30px;
    top: 12px;
    border: 4px solid transparent;
    border-top-color: #111;
    border-bottom: 0;
}

/* Statuszeile */
.status {
    height: 25px;
    flex: none;
    display: flex;
    background: #f0f0f0;
}
.status-left {
    width: 964px;
    border-right: 1px solid #9a9a9a;
}
.filter {
    margin: 2px 0 0 97px;
    width: 159px;
    height: 23px;
    display: flex;
    align-items: center;
    justify-content: space-between;
    padding: 0 6px;
    border: 1px solid #707070;
    border-radius: 2px;
    background: linear-gradient(#f2f2f2, #e6e6e6 48%, #d4d4d4);
    color: #222;
    font-size: 11px;
    letter-spacing: -0.6px;
}
.filter i {
    border: 4px solid transparent;
    border-top: 5px solid #000;
    border-bottom: 0;
    margin-top: 3px;
}
.light {
    margin-left: 2px;
    padding: 3px 0 0 7px;
    border-left: 1px solid #9a9a9a;
}

/* Taskleiste */
.taskbar {
    height: 36px;
    flex: none;
    display: flex;
    border-top: 1px solid #2c4258;
    background: #a5bedb;
    box-shadow: inset 0 1px 0 #c3d5e8;
    overflow: hidden;
}
.start {
    width: 59px;
    padding-left: 8px;
    background: linear-gradient(#8297b0, #7b8fab);
}
.task {
    width: 62px;
    height: 40px;
    padding: 5px 0 0 13px;
}
.task.folder {
    padding: 7px 0 0 15px;
}
.task.player {
    padding: 6px 0 0 17px;
}
.task.open {
    width: 60px;
    padding-top: 1px;
    border: 1px solid #2c4258;
    border-top: 0;
    background: linear-gradient(135deg, #dde6f0, #b4c8df 60%, #c3d4e7);
}
.task.active {
    margin-left: 2px;
    padding: 7px 0 0 15px;
    background: linear-gradient(135deg, #f0f4f8, #c3d3e5);
}
.tray {
    margin-left: auto;
    width: 250px;
    display: flex;
    align-items: flex-start;
    color: #fff;
    background: linear-gradient(90deg, #a5bedb, #7f95b0 35px, #7e92ae);
}
.lang {
    margin: 8px 0 0 40px;
    width: 33px;
    letter-spacing: -0.5px;
}
.tray-up {
    margin-top: 18px;
    border: 4px solid transparent;
    border-top: 0;
    border-bottom-color: #fff;
}
.flag {
    margin: 11px 0 0 12px;
}
.net {
    margin: 11px 0 0 7px;
}
.sound {
    margin: 11px 0 0 6px;
}
.clock {
    width: 60px;
    margin: 3px 0 0 16px;
    display: flex;
    flex-direction: column;
    align-items: center;
    line-height: 17px;
    font-size: 11.5px;
    letter-spacing: -0.5px;
}
.peek {
    margin-left: auto;
    width: 10px;
    height: 36px;
    flex: none;
    border-left: 1px solid #2f4358;
    background: linear-gradient(135deg, #9aabc2, #4b6078);
}
```
